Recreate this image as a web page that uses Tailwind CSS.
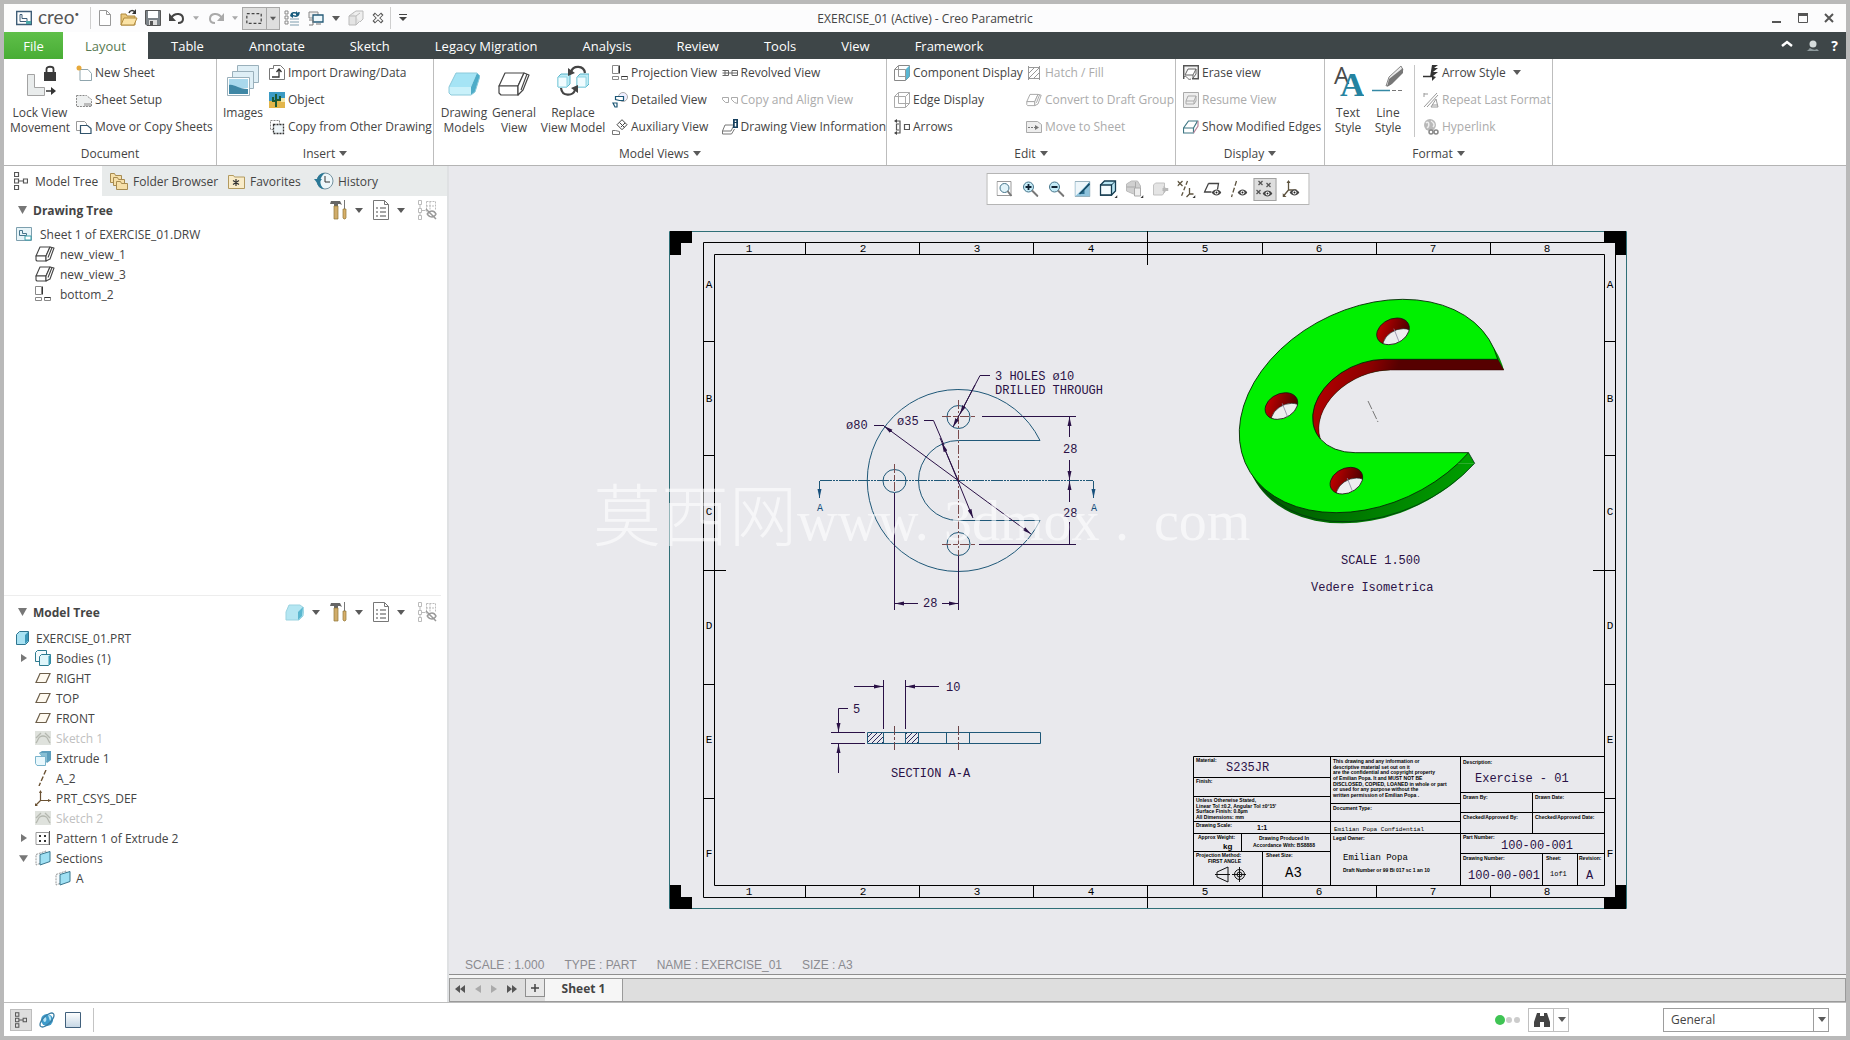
<!DOCTYPE html>
<html lang="en">
<head>
<meta charset="utf-8">
<title>EXERCISE_01 (Active) - Creo Parametric</title>
<script src="https://cdn.jsdelivr.net/npm/@tailwindcss/browser@4"></script>
</head>
<body class="flex h-screen flex-col overflow-hidden border-4 border-[#b9b9b9] bg-white font-['Open_Sans','Noto_Sans',sans-serif] text-xs leading-[15px] text-[#444]">

<svg class="hidden" aria-hidden="true">
  <symbol id="caret" viewBox="0 0 8 5"><path d="M0 0h8L4 5z" fill="#5a5a5a"/></symbol>
  <symbol id="view" viewBox="0 0 20 16"><g fill="#fff" stroke="#444" stroke-width="1.100" stroke-linejoin="round"><path d="M5 1h10L11 10H1z"/><path d="M1 10v4l1 1h9l0-5z"/><path d="M15 1l4 1-4 11-4 2v-5z"/><path d="M17 1.500l-4 10" fill="none"/></g></symbol>
  <symbol id="proj" viewBox="0 0 16 16"><g fill="none" stroke="#888"><path d="M.5.500h6v8h-6z"/><path d="M.5 11.500h6v3h-6zM9.500 11.500h6v3h-6z"/><path d="M7.500.500v8M9.500 11.500h6" stroke="#333"/></g></symbol>
  <symbol id="plane" viewBox="0 0 16 16"><path d="M5 3.500h10l-4 9H1z" fill="#fffaf0" stroke="#6d5f4b" stroke-width="1.200"/></symbol>
  <symbol id="sketch" viewBox="0 0 16 16"><path d="M0 1h16v14H0z" fill="#dfe2dd"/><path d="M1 13c3-4 2-7 7-7s4 3 7 7M1 8l5-5M15 8l-5-5" fill="none" stroke="#b4b7af" stroke-width="1.300"/></symbol>
  <symbol id="section" viewBox="0 0 16 16"><path d="M1 4.500L11 1v10L1 15z" fill="#f7fbfd" stroke="#999" stroke-dasharray="2 1"/><path d="M5 4.500L15 1.500v10L5 15z" fill="#9fe0f3" stroke="#38768e"/></symbol>
  <symbol id="tools" viewBox="0 0 17 20"><path d="M1 1h9l2 4-2-1H8v2H4V4H0z" fill="#666"/><path d="M4 6h4v13H4z" fill="#d0ac6a" stroke="#8f7538" stroke-width=".7"/><path d="M14.500 0v9" stroke="#777"/><path d="M13 9h3v9l-1 1h-1l-1-1z" fill="#d8b06a" stroke="#8f7538" stroke-width=".7"/></symbol>
  <symbol id="list" viewBox="0 0 16 20"><path d="M.5.500h11l4 4v15H.5z" fill="#fff" stroke="#777"/><path d="M11.500.500v4h4" fill="none" stroke="#777"/><path d="M3 8h2M3 12h2M3 16h2M7 8h6M7 12h6M7 16h6" stroke="#888" stroke-width="1.300"/></symbol>
  <symbol id="hidetree" viewBox="0 0 20 20"><g fill="none" stroke="#bbb"><path d="M1.500.500h3v4h-3zM1.500 8.500h3v4h-3zM1.500 15.500h3v4h-3zM3 4.500v4M3 12.500v3M4.500 10.500h4"/><path d="M9.500 1.500h9v9M9.500 1.500v10M13 1.500v9M9 6h9" stroke-dasharray="2 1"/></g><path d="M10 14c3-4 7-4 9 0-2 4-6 4-9 0M9 9l10 10" fill="none" stroke="#999" stroke-width="1.500"/></symbol>
  <symbol id="nodes" viewBox="0 0 14 18"><path d="M.5.500h4v4h-4zM.5 7h4v4h-4zM.5 13.500h4v4h-4zM9.500 7h4v4h-4zM4.500 9h5" fill="none" stroke="#555" stroke-width="1.200"/></symbol>
  <symbol id="eye" viewBox="0 0 10 7"><path d="M0 3.500C3-.5 7-.5 10 3.500 7 7.500 3 7.500 0 3.500" fill="#444"/><circle cx="5" cy="3.500" r="2" fill="#fff"/><circle cx="5" cy="3.500" r="1" fill="#222"/></symbol>
</svg>

<!-- Title bar -->
<header class="flex h-7 shrink-0 items-center bg-[#fcfcfd]">
  <div class="flex w-[415px] shrink-0 items-center">
    <svg class="ml-3 size-4" viewBox="0 0 16 16"><path d="M.7 1.500h14.600v13H.7z" fill="#fff" stroke="#3f5d78" stroke-width="1.400"/><path d="M4 4.500h2v4h5v3H4z" fill="none" stroke="#3f5d78"/><path d="M10 11h5v3h-5z" fill="#49a5a5"/></svg>
    <span class="ml-1.5 flex h-5 w-[42px] items-start font-['Lato',sans-serif] text-[19px] leading-[18px] text-[#555]">creo<span class="text-[8px] leading-[12px]">•</span></span>
    <span class="ml-2.5 h-[22px] w-px bg-[#cfcfcf]"></span>
    <button class="ml-1.5 size-4" aria-label="New"><svg viewBox="0 0 16 16"><path d="M2.500.500h7l4 4v11h-11z" fill="#fff" stroke="#999"/><path d="M9.500.500v4h4" fill="none" stroke="#999"/></svg></button>
    <button class="ml-[7px] size-[18px]" aria-label="Open"><svg viewBox="0 0 18 18"><path d="M1 5h5l1 2h8v9H1z" fill="#e9c77c" stroke="#b08a3d"/><path d="M4 9h13l-3 7H1z" fill="#fbe3a6" stroke="#b08a3d"/><path d="M9 4c1-3 4-3 6-1" fill="none" stroke="#333" stroke-width="1.500"/><path d="M16 0v5h-4z" fill="#333"/></svg></button>
    <button class="ml-[7px] size-4" aria-label="Save"><svg viewBox="0 0 16 16"><path d="M.5.500h15v15H2l-1.500-1.500z" fill="#7d8489" stroke="#555"/><path d="M3 1h10v7H3z" fill="#fff"/><path d="M4 10h8v5H4z" fill="#ddd"/><path d="M5 11h3v4H5z" fill="#555"/></svg></button>
    <button class="ml-2 size-4" aria-label="Undo"><svg viewBox="0 0 16 16"><path d="M2 8c4-6 12-5 12 1 0 3-2 4-5 4" fill="none" stroke="#444" stroke-width="2"/><path d="M0 3v8h7z" fill="#444"/></svg></button>
    <svg class="ml-2 h-1 w-1.5 opacity-50"><use href="#caret"/></svg>
    <button class="ml-[9px] size-4" aria-label="Redo"><svg viewBox="0 0 16 16"><path d="M14 8C10 2 2 3 2 9c0 3 2 4 5 4" fill="none" stroke="#aaa" stroke-width="2"/><path d="M16 3v8H9z" fill="#aaa"/></svg></button>
    <svg class="ml-2 h-1 w-1.5 opacity-50"><use href="#caret"/></svg>
    <button class="ml-1 flex h-[23px] w-[38px] items-center border border-[#a8a8a8] bg-[#dedede]" aria-label="Select"><svg class="h-[21px] w-6 shrink-0 border-r border-[#a8a8a8]" viewBox="0 0 24 21"><path d="M4 5.500h15v10H4z" fill="none" stroke="#444" stroke-width="1.300" stroke-dasharray="3 2"/></svg><svg class="ml-[3px] h-[5px] w-1.5"><use href="#caret"/></svg></button>
    <button class="ml-1 size-4" aria-label="Regenerate"><svg viewBox="0 0 16 16"><path d="M1 1h3v3H1zM1 6h3v3H1zM1 11h3v3H1z" fill="none" stroke="#888"/><path d="M6 9h9M6 12h9M6 15h9" stroke="#7c9cad" stroke-width="1.200"/><path d="M7 6c0-4 4-4 7-2M15 2c0 5-4 5-7 3" fill="none" stroke="#165b7d" stroke-width="1.500"/><path d="M12 1v5l3-2zM9 3v5L6 6z" fill="#165b7d"/></svg></button>
    <button class="ml-2 size-4" aria-label="Windows"><svg viewBox="0 0 16 16"><path d="M1 2h9v6H1z" fill="#eee" stroke="#888"/><path d="M5 5h10v7H5z" fill="#eef8fc" stroke="#245a77" stroke-width="1.300"/><path d="M1 10h4v5H1M8 14h5" fill="none" stroke="#777"/></svg></button>
    <svg class="ml-2 h-[5px] w-2"><use href="#caret"/></svg>
    <button class="ml-2 size-4" aria-label="Close inactive"><svg viewBox="0 0 16 16"><path d="M1 6l4-3h7v8l-4 4H1z" fill="#e4e4e4" stroke="#bbb"/><path d="M5 3l3-2h7v8l-3 3" fill="#efefef" stroke="#bbb"/><path d="M1 6h7v9M8 6l4-3" fill="none" stroke="#bbb"/></svg></button>
    <button class="ml-2 size-3" aria-label="Close window"><svg viewBox="0 0 14 14"><path d="M2 2l10 10M12 2L2 12" stroke="#555" stroke-width="4"/><path d="M3 3l8 8M11 3l-8 8" stroke="#fff" stroke-width="2"/></svg></button>
    <span class="ml-1.5 h-[22px] w-px bg-[#cfcfcf]"></span>
    <button class="ml-2 w-2" aria-label="Customize toolbar"><svg viewBox="0 0 8 8"><path d="M0 0h8v1H0zM0 3h8L4 7z" fill="#444"/></svg></button>
  </div>
  <h1 class="grow text-center">EXERCISE_01 (Active) - Creo Parametric</h1>
  <div class="flex w-[415px] shrink-0 items-center justify-end gap-4 pr-3">
    <button aria-label="Minimize"><svg class="size-2.5" viewBox="0 0 10 10"><path d="M0 8h9v2H0z" fill="#555"/></svg></button>
    <button aria-label="Maximize"><svg class="size-2.5" viewBox="0 0 10 10"><path d="M.5 1h9v8.500h-9z" fill="none" stroke="#555"/><path d="M0 0h10v3H0z" fill="#555"/></svg></button>
    <button aria-label="Close"><svg class="size-2.5" viewBox="0 0 10 10"><path d="M1 1l8 8M9 1L1 9" stroke="#555" stroke-width="2"/></svg></button>
  </div>
</header>

<!-- Ribbon tabs -->
<nav class="flex h-[27px] shrink-0 items-stretch bg-[#3e4648] text-[13px] text-white">
  <button class="w-[59px] bg-gradient-to-b from-[#5fbf49] to-[#48ad35] pt-0.5">File</button>
  <button class="w-[85px] bg-white pt-0.5 text-[#587a52]">Layout</button>
  <div class="flex grow items-center gap-[45px] pl-[23px] pt-0.5">
    <button>Table</button><button>Annotate</button><button>Sketch</button><button>Legacy Migration</button><button>Analysis</button><button>Review</button><button>Tools</button><button>View</button><button>Framework</button>
  </div>
  <div class="flex items-center gap-3 pr-2">
    <button aria-label="Collapse ribbon"><svg class="h-3 w-3" viewBox="0 0 12 12"><path d="M1 6l5-4 5 4" fill="none" stroke="#fff" stroke-width="2.500"/></svg></button>
    <button aria-label="Account"><svg class="h-3 w-3.5" viewBox="0 0 14 12"><circle cx="8" cy="4" r="3.500" fill="#d6dcdc"/><path d="M0 11c4 0 3-2 5-3 3 2 5 2 7 1l2 2z" fill="#8e9a9c"/></svg></button>
    <button class="text-sm font-bold" aria-label="Help">?</button>
  </div>
</nav>

<!-- Ribbon -->
<section class="flex h-[107px] shrink-0 border-b border-[#b4b4b4] bg-white">
  <div class="flex w-[213px] flex-col border-r border-[#bdbdbd]">
    <div class="flex h-[82px]">
      <button class="ml-1 flex w-[64px] shrink-0 flex-col items-center gap-2 pt-1.5"><svg class="size-8 shrink-0" viewBox="0 0 32 32"><path d="M3.500 9.500h7v13h10v8h-17z" fill="#e9ecec" stroke="#a3a3a3"/><path d="M20 7h12v9H20z" fill="#3a3a3a"/><path d="M22.500 7V4c0-3 7-3 7 0v3" fill="none" stroke="#3a3a3a" stroke-width="1.800"/><path d="M22 26h7" stroke="#333" stroke-width="1.500"/><path d="M27 22l5 4-5 4z" fill="#333"/></svg><span>Lock View<br>Movement</span></button>
      <div class="ml-1 flex flex-col items-start whitespace-nowrap">
        <button class="flex h-[27px] items-center gap-[3px]"><svg class="size-4" viewBox="0 0 16 16"><path d="M4 4.500h8l3.500 4v7H4z" fill="#fff" stroke="#8fa5ad"/><circle cx="3" cy="3" r="2.500" fill="#e7a93b"/></svg>New Sheet</button>
        <button class="flex h-[27px] items-center gap-[3px]"><svg class="size-4" viewBox="0 0 16 16"><path d="M.5 3.500h10l5 4v7H.5z" fill="#eef0f0" stroke="#888" stroke-dasharray="2 1"/><path d="M8 11h7v3H8z" fill="#bbb"/></svg>Sheet Setup</button>
        <button class="flex h-[27px] items-center gap-[3px]"><svg class="size-4" viewBox="0 0 16 16"><path d="M.5 2.500h8l2 2v7H.5z" fill="#fff" stroke="#999"/><path d="M4.500 6.500h7l3.500 3v5H4.500z" fill="#fff" stroke="#31536b" stroke-width="1.200"/></svg>Move or Copy Sheets</button>
      </div>
    </div>
    <div class="flex h-6 items-center justify-center">Document</div>
  </div>
  <div class="flex w-[217px] flex-col border-r border-[#bdbdbd]">
    <div class="flex h-[82px]">
      <button class="ml-1 flex w-11 shrink-0 flex-col items-center gap-2 pt-1.5"><svg class="size-8 shrink-0" viewBox="0 0 32 32"><g fill="#dfeff6" stroke="#9ab0bb"><path d="M10.500.500h21v17h-21z"/><path d="M5.500 6.500h21v17h-21z"/><path d="M.5 12.500h22v18H.5z" fill="#fff"/></g><path d="M2 14h19v9H2z" fill="#a9d8ec"/><path d="M2 20c6-1 8 4 19 4v5H2z" fill="#3f87a5"/></svg><span>Images</span></button>
      <div class="ml-1 flex flex-col items-start whitespace-nowrap">
        <button class="flex h-[27px] items-center gap-[3px]"><svg class="size-4" viewBox="0 0 16 16"><path d="M.5 3.500h4v-3h7l4 4v10H.5z" fill="#fff" stroke="#777"/><path d="M3 12h7V5M7.500 7L10 4l2.500 3" fill="none" stroke="#333" stroke-width="1.300"/></svg>Import Drawing/Data</button>
        <button class="flex h-[27px] items-center gap-[3px]"><svg class="size-4" viewBox="0 0 16 16"><path d="M0 0h16v16H0z" fill="#3b9bc4"/><path d="M0 9h16v7H0z" fill="#e2b54a"/><path d="M7 15V2M4 5v4h3M11 4v4H7" fill="none" stroke="#1d5a33" stroke-width="2"/><path d="M12 6h4v4h-4z" fill="#f3e6a8"/></svg>Object</button>
        <button class="flex h-[27px] items-center gap-[3px]"><svg class="size-4" viewBox="0 0 16 16"><path d="M1.500 1.500h9v9h-9z" fill="none" stroke="#888" stroke-dasharray="2 1"/><path d="M4.500 5.500h10v9h-10z" fill="#eef5f8" stroke="#333" stroke-width="1.300" stroke-dasharray="2 1"/></svg>Copy from Other Drawing</button>
      </div>
    </div>
    <button class="flex h-6 items-center justify-center gap-1">Insert<svg class="h-[5px] w-2"><use href="#caret"/></svg></button>
  </div>
  <div class="flex w-[453px] flex-col border-r border-[#bdbdbd]">
    <div class="flex h-[82px]">
      <button class="ml-1 flex w-[52px] shrink-0 flex-col items-center gap-2 pt-1.5"><svg class="size-8 shrink-0" viewBox="0 0 32 32"><path d="M8 8h21l-6 14H1z" fill="#a5e4f5"/><path d="M1 22h22v8H3l-2-2z" fill="#c9f1fa"/><path d="M29 8l3 3-5 16-4 3v-8z" fill="#4eacc8"/><path d="M8 8h21l3 3-5 16-4 3H3l-2-2v-6z" fill="none" stroke="#8ccadb"/></svg><span>Drawing<br>Models</span></button>
      <button class="flex w-12 shrink-0 flex-col items-center gap-2 pt-1.5"><svg class="size-8 shrink-0" viewBox="0 0 32 32"><g fill="#fff" stroke="#444" stroke-width="1.200" stroke-linejoin="round"><path d="M7 8h19l-6 13H1z"/><path d="M1 21v7l2 2h17v-9z"/><path d="M26 8l5 2-6 15-5 5v-9z"/><path d="M29 9l-6 16" fill="none"/></g></svg><span>General<br>View</span></button>
      <button class="flex w-[70px] shrink-0 flex-col items-center gap-2 whitespace-nowrap pt-1.5"><svg class="size-8 shrink-0" viewBox="0 0 32 32"><path d="M1 12l3-3h9v10l-3 3H1zM20 12l3-3h9v10l-3 3h-9z" fill="#bdebf5" stroke="#5ab4c9"/><path d="M1 12h9v10H1zM20 12h9v10h-9z" fill="#f1fcff" stroke="#8ed4e2"/><path d="M28 8c-1-8-12-8-14-1M4 23c1 9 12 8 14 2" fill="none" stroke="#444" stroke-width="2.200"/><path d="M11 3v8l7-3zM21 28v-8l-7 3z" fill="#444"/></svg><span>Replace<br>View Model</span></button>
      <div class="ml-1 flex w-[110px] flex-col items-start whitespace-nowrap">
        <button class="flex h-[27px] items-center gap-[3px]"><svg class="size-4"><use href="#proj"/></svg>Projection View</button>
        <button class="flex h-[27px] items-center gap-[3px]"><svg class="size-4" viewBox="0 0 16 16"><circle cx="11" cy="5" r="4.500" fill="#eef" stroke="#aaa"/><path d="M3.500 4.500h8v4h-4l-4-1zM1 11h4v4H3z" fill="#fff" stroke="#1b5675" stroke-width="1.200"/></svg>Detailed View</button>
        <button class="flex h-[27px] items-center gap-[3px]"><svg class="size-4" viewBox="0 0 16 16"><path d="M10 .7l5 5-5 5-5-5z" fill="#fff" stroke="#444"/><path d="M7.500 3.500l5 5M9 8l4-4" stroke="#444"/><path d="M.5 15.500v-4h3l4 1v3z" fill="none" stroke="#777"/></svg>Auxiliary View</button>
      </div>
      <div class="flex flex-col items-start whitespace-nowrap">
        <button class="flex h-[27px] items-center gap-[3px]"><svg class="size-4" viewBox="0 0 16 16"><path d="M.5 5.500h6v5h-6M3 5.500v5M.5 8H16M10 5.500h5.500v5H10z" fill="none" stroke="#666"/></svg>Revolved View</button>
        <button class="flex h-[27px] items-center gap-[3px] text-[#ababab]"><svg class="size-4" viewBox="0 0 16 16"><path d="M.5 5.500h6v5h-3l-3-3zM9.500 5.500h6v6l-3-1-3-3z" fill="none" stroke="#aaa"/></svg>Copy and Align View</button>
        <button class="flex h-[27px] items-center gap-[3px]"><svg class="size-4" viewBox="0 0 16 16"><path d="M3 6h9l-3 6H.5zM.5 12v3h9l3-5" fill="#fff" stroke="#777"/><path d="M11 0h5v9h-5z" fill="#17405e"/><path d="M13.500 1.500v1.500M13.500 4v3.500" stroke="#fff" stroke-width="1.500"/></svg>Drawing View Information</button>
      </div>
    </div>
    <button class="flex h-6 items-center justify-center gap-1">Model Views<svg class="h-[5px] w-2"><use href="#caret"/></svg></button>
  </div>
  <div class="flex w-[289px] flex-col border-r border-[#bdbdbd]">
    <div class="flex h-[82px] pl-[7px]">
      <div class="flex w-[132px] flex-col items-start whitespace-nowrap">
        <button class="flex h-[27px] items-center gap-[3px]"><svg class="size-4" viewBox="0 0 16 16"><path d="M.5 4.500l4-4h11v11l-4 4H.5z" fill="#fff" stroke="#888"/><path d="M11.500 4.500l4-4v11l-4 4z" fill="#59b7d3"/><path d="M4.500.500v11h7M.5 4.500h11v11" fill="none" stroke="#999"/></svg>Component Display</button>
        <button class="flex h-[27px] items-center gap-[3px]"><svg class="size-4" viewBox="0 0 16 16"><path d="M.5 4.500l4-4h11v11l-4 4H.5zM4.500.500v11h11M.5 4.500h11v11M11.500 4.500l4-4" fill="none" stroke="#aaa"/></svg>Edge Display</button>
        <button class="flex h-[27px] items-center gap-[3px]"><svg class="size-4" viewBox="0 0 16 16"><path d="M2 2h4v12H2M5 5H2.500v6H5M10.500 5.500h5v5h-5z" fill="none" stroke="#555" stroke-width="1.200"/><path d="M0 2l3-2v4zM0 14l3-2v4z" fill="#444"/></svg>Arrows</button>
      </div>
      <div class="flex flex-col items-start whitespace-nowrap text-[#ababab]">
        <button class="flex h-[27px] items-center gap-[3px]"><svg class="size-4" viewBox="0 0 16 16"><path d="M2 2.500h12M2 13.500h12M2.500 1v14M13.500 1v14M3 8l5-5M3 13L13 3M8 13l5-5" stroke="#999" fill="none"/></svg>Hatch / Fill</button>
        <button class="flex h-[27px] items-center gap-[3px]"><svg class="size-4 opacity-50"><use href="#view"/></svg>Convert to Draft Group</button>
        <button class="flex h-[27px] items-center gap-[3px]"><svg class="size-4" viewBox="0 0 16 16"><path d="M.5 2.500h11l4 3v8H.5z" fill="#eee" stroke="#aaa"/><path d="M2 8.500h8" stroke="#777" stroke-dasharray="2 1"/><path d="M9 6l4 2.500L9 11z" fill="#777"/></svg>Move to Sheet</button>
      </div>
    </div>
    <button class="flex h-6 items-center justify-center gap-1">Edit<svg class="h-[5px] w-2"><use href="#caret"/></svg></button>
  </div>
  <div class="flex w-[149px] flex-col border-r border-[#bdbdbd]">
    <div class="flex h-[82px] flex-col items-start whitespace-nowrap pl-[7px]">
      <button class="flex h-[27px] items-center gap-[3px]"><svg class="size-4" viewBox="0 0 16 16"><path d="M.7 9V.7h14.600v13H9M.7 9v5" fill="#f4f4f4" stroke="#555" stroke-width="1.400"/><path d="M2 10l3-6h8l-3 6zM10 10v3l3-4V4M1 12c3-3 3 4 7 2" fill="#fff" stroke="#666"/></svg>Erase view</button>
      <button class="flex h-[27px] items-center gap-[3px] text-[#ababab]"><svg class="size-4" viewBox="0 0 16 16"><path d="M.5.500h15v15H.5z" fill="#eee" stroke="#aaa"/><path d="M3 9l2-5h8l-2 5zM3 9v3h8V9M11 12l2-3V4" fill="none" stroke="#aaa"/></svg>Resume View</button>
      <button class="flex h-[27px] items-center gap-[3px]"><svg class="size-4" viewBox="0 0 16 16"><path d="M.5 9l5-7h9l-4 7zM.5 9v5h10V9" fill="#fff" stroke="#3f7784" stroke-width="1.200"/><path d="M10.500 14l4.500-7V2" fill="none" stroke="#b8869b" stroke-width="1.200"/></svg>Show Modified Edges</button>
    </div>
    <button class="flex h-6 items-center justify-center gap-1">Display<svg class="h-[5px] w-2"><use href="#caret"/></svg></button>
  </div>
  <div class="flex w-[228px] flex-col border-r border-[#bdbdbd]">
    <div class="flex h-[82px]">
      <button class="ml-[3px] flex w-10 shrink-0 flex-col items-center gap-2 pt-1.5"><svg class="size-8 shrink-0" viewBox="0 0 32 32"><text x="2" y="19" font-family="Open Sans" font-size="24" fill="#4a4a4a">A</text><text x="8" y="31" font-family="Liberation Serif" font-weight="700" font-size="34" fill="#2583a0">A</text></svg><span>Text<br>Style</span></button>
      <button class="flex w-10 shrink-0 flex-col items-center gap-2 pt-1.5"><svg class="size-8 shrink-0" viewBox="0 0 32 32"><path d="M14 21l3-9L29 1l2 4-12 14z" fill="#ececec" stroke="#888"/><path d="M17 14L31 3v5L20 19l-5 3z" fill="#777"/><path d="M0 25.500h18" stroke="#3589a5" stroke-width="1.500"/><path d="M20 25.500h12" stroke="#777" stroke-dasharray="4 2"/></svg><span>Line<br>Style</span></button>
      <span class="ml-1.5 mt-1.5 h-[72px] w-px bg-[#c6c6c6]"></span>
      <div class="ml-2 flex flex-col items-start whitespace-nowrap">
        <button class="flex h-[27px] items-center gap-[3px]"><svg class="size-4" viewBox="0 0 16 16"><path d="M0 11.500h9" stroke="#333" stroke-width="1.500"/><path d="M9 0h6l-4 3h4l-5 4h5l-5 4 3 1-4 4V12H7z" fill="#333"/></svg>Arrow Style<svg class="ml-1 h-[5px] w-2"><use href="#caret"/></svg></button>
        <button class="flex h-[27px] items-center gap-[3px] text-[#ababab]"><svg class="size-4" viewBox="0 0 16 16"><path d="M1 15L14 1M4 15L15 3M1 2h4M1 5V1M8 15l5-8 2 8zM9 13h5" fill="none" stroke="#999"/></svg>Repeat Last Format</button>
        <button class="flex h-[27px] items-center gap-[3px] text-[#ababab]"><svg class="size-4" viewBox="0 0 16 16"><circle cx="7" cy="6" r="6" fill="#b9b9b9"/><path d="M3 4c3-3 4 3 1 5M8 2c3 2 4 4 2 6" stroke="#eee" fill="none" stroke-width="1.500"/><circle cx="8" cy="13" r="2" fill="#fff" stroke="#888" stroke-width="1.500"/><circle cx="13" cy="13" r="2" fill="#fff" stroke="#888" stroke-width="1.500"/></svg>Hyperlink</button>
      </div>
    </div>
    <button class="flex h-6 items-center justify-center gap-1">Format<svg class="h-[5px] w-2"><use href="#caret"/></svg></button>
  </div>
</section>

<main class="flex min-h-0 grow">
  <!-- Navigator -->
  <aside class="flex w-[443px] shrink-0 flex-col bg-white">
    <div class="flex h-[30px] shrink-0 items-center whitespace-nowrap bg-[#e8ebeb]">
      <button class="flex h-full w-[98px] items-center gap-[7px] bg-white pl-2.5"><svg class="h-[18px] w-3.5"><use href="#nodes"/></svg>Model Tree</button>
      <button class="ml-2 flex w-[118px] items-center gap-[5px]"><svg class="size-[18px]" viewBox="0 0 18 18"><g fill="#f6dfa8" stroke="#a78b50"><path d="M.5 1.500h4l1 2h6v7H.5z"/><path d="M3.500 5.500h4l1 2h6v6h-11z"/><path d="M6.500 9.500h4l1 2h6v6h-11z"/></g></svg>Folder Browser</button>
      <button class="flex w-[86px] items-center gap-[5px]"><svg class="h-[15px] w-[17px]" viewBox="0 0 17 15"><path d="M.5 1.500h5l1 1.500h10v11.500H.5z" fill="#f9ecc9" stroke="#b39a5f"/><path d="M8 5v7M5 6.500l6 4M11 6.500l-6 4" stroke="#333" stroke-width="1.200"/></svg>Favorites</button>
      <button class="flex items-center gap-1"><svg class="h-[18px] w-5" viewBox="0 0 20 18"><circle cx="11" cy="9" r="8" fill="#eef7fa" stroke="#75929f"/><path d="M11 1C0 1 1 17 10 17 5 13 5 5 11 1" fill="#2a7896"/><path d="M0 7h8l-4 5z" fill="#2a7896"/><path d="M11 4v6h5" fill="none" stroke="#333"/></svg>History</button>
    </div>
    <section class="mr-1.5 h-[400px] shrink-0 border-b border-[#ededed]">
      <div class="flex h-7 items-center pl-3.5 pr-1">
        <svg class="h-2 w-[9px]" viewBox="0 0 9 8"><path d="M0 0h9L4.500 8z" fill="#777"/></svg>
        <h2 class="ml-1.5 grow font-bold">Drawing Tree</h2>
        <button aria-label="Settings"><svg class="h-5 w-[17px]"><use href="#tools"/></svg></button>
        <svg class="ml-2 h-[5px] w-2"><use href="#caret"/></svg>
        <button class="ml-2.5" aria-label="Display"><svg class="h-5 w-4"><use href="#list"/></svg></button>
        <svg class="ml-2 h-[5px] w-2"><use href="#caret"/></svg>
        <button class="ml-3" aria-label="Hide"><svg class="size-5"><use href="#hidetree"/></svg></button>
      </div>
      <ul>
        <li class="flex h-5 items-center gap-2 pl-3"><svg class="size-4" viewBox="0 0 16 16"><path d="M.5 1.500h15v13H.5z" fill="#e7f4f8" stroke="#7d9fae"/><path d="M3.500 4.500h3v3h4v2h-7z" fill="none" stroke="#46748b"/><path d="M9 10h6v4H9z" fill="#fff" stroke="#3aa0aa"/></svg>Sheet 1 of EXERCISE_01.DRW</li>
        <li class="flex h-5 items-center gap-[5px] pl-[31px]"><svg class="h-4 w-5"><use href="#view"/></svg>new_view_1</li>
        <li class="flex h-5 items-center gap-[5px] pl-[31px]"><svg class="h-4 w-5"><use href="#view"/></svg>new_view_3</li>
        <li class="flex h-5 items-center gap-[9px] pl-[31px]"><svg class="size-4"><use href="#proj"/></svg>bottom_2</li>
      </ul>
    </section>
    <section class="mr-1.5 grow">
      <div class="flex h-8 items-center pl-3.5 pr-1">
        <svg class="h-2 w-[9px]" viewBox="0 0 9 8"><path d="M0 0h9L4.500 8z" fill="#777"/></svg>
        <h2 class="ml-1.5 grow font-bold">Model Tree</h2>
        <button aria-label="Model"><svg class="h-[17px] w-[19px]" viewBox="0 0 19 17"><path d="M4 1h11l4 3-1 8-4 4H1V8z" fill="#b4e6f2" stroke="#9bd3e0"/><path d="M13 8l5-5-1 9-4 4z" fill="#5bb7cf"/></svg></button>
        <svg class="ml-2 h-[5px] w-2"><use href="#caret"/></svg>
        <button class="ml-2.5" aria-label="Settings"><svg class="h-5 w-[17px]"><use href="#tools"/></svg></button>
        <svg class="ml-2 h-[5px] w-2"><use href="#caret"/></svg>
        <button class="ml-2.5" aria-label="Display"><svg class="h-5 w-4"><use href="#list"/></svg></button>
        <svg class="ml-2 h-[5px] w-2"><use href="#caret"/></svg>
        <button class="ml-3" aria-label="Hide"><svg class="size-5"><use href="#hidetree"/></svg></button>
      </div>
      <ul>
        <li class="flex h-5 items-center gap-[7px] pl-3"><svg class="h-3.5 w-[13px]" viewBox="0 0 13 14"><path d="M.5 3.500l3-3h9v10l-3 3h-9z" fill="#a8e2f3" stroke="#2e7590"/><path d="M9 4l3-3v9l-3 3z" fill="#3b97b8"/></svg>EXERCISE_01.PRT</li>
        <li class="flex h-5 items-center gap-[5px] pl-4"><svg class="mr-0.5 h-2 w-2" viewBox="0 0 8 8"><path d="M1 0l6 4-6 4z" fill="#777"/></svg><svg class="size-4" viewBox="0 0 16 16"><path d="M.5 2.500l2-2h9v9l-2 2h-9z" fill="#f4fbfd" stroke="#2d7b90"/><path d="M4.500 6.500l2-2h9v9l-2 2h-9z" fill="#dff6fa" stroke="#2d7b90"/><path d="M13.500 6.500l2-2v9l-2 2z" fill="#3a9ab3"/></svg>Bodies (1)</li>
        <li class="flex h-5 items-center gap-[5px] pl-[31px]"><svg class="size-4"><use href="#plane"/></svg>RIGHT</li>
        <li class="flex h-5 items-center gap-[5px] pl-[31px]"><svg class="size-4"><use href="#plane"/></svg>TOP</li>
        <li class="flex h-5 items-center gap-[5px] pl-[31px]"><svg class="size-4"><use href="#plane"/></svg>FRONT</li>
        <li class="flex h-5 items-center gap-[5px] pl-[31px] text-[#c0c0c0]"><svg class="size-4"><use href="#sketch"/></svg>Sketch 1</li>
        <li class="flex h-5 items-center gap-[5px] pl-[31px]"><svg class="size-4" viewBox="0 0 16 16"><path d="M4 3l3-2h9v9l-4 3z" fill="#5d9fbd"/><path d="M4 3h8v9" fill="#88bfd4"/><path d="M.5 6.500h10v9H2l-1.500-2z" fill="#e9f8fd" stroke="#7ab4cc"/></svg>Extrude 1</li>
        <li class="flex h-5 items-center gap-[5px] pl-[31px]"><svg class="size-4" viewBox="0 0 16 16"><path d="M11 0L4 16" stroke="#6a5132" stroke-width="1.400" stroke-dasharray="5 2"/></svg>A_2</li>
        <li class="flex h-5 items-center gap-[5px] pl-[31px]"><svg class="size-4" viewBox="0 0 16 16"><path d="M5.500 1v9.500H16M5.500 10.500L1 15" fill="none" stroke="#6a5132" stroke-width="1.200"/><path d="M4 3h3L5.500 0zM13 9v3l3-1.500zM0 13v3h3z" fill="#6a5132"/></svg>PRT_CSYS_DEF</li>
        <li class="flex h-5 items-center gap-[5px] pl-[31px] text-[#c0c0c0]"><svg class="size-4"><use href="#sketch"/></svg>Sketch 2</li>
        <li class="flex h-5 items-center gap-[5px] pl-4"><svg class="mr-0.5 h-2 w-2" viewBox="0 0 8 8"><path d="M1 0l6 4-6 4z" fill="#777"/></svg><svg class="size-4" viewBox="0 0 16 16"><path d="M1 2.500h13v12H1z" fill="#fff" stroke="#999"/><path d="M14.500 1v14" stroke="#555"/><path d="M4 5h2v2H4zM9 5h2v2H9zM4 10h2v2H4zM9 10h2v2H9z" fill="#333"/></svg>Pattern 1 of Extrude 2</li>
        <li class="flex h-5 items-center gap-[5px] pl-[15px]"><svg class="mr-0.5 h-[7px] w-[9px]" viewBox="0 0 8 6"><path d="M0 0h8L4 6z" fill="#777"/></svg><svg class="size-4"><use href="#section"/></svg>Sections</li>
        <li class="flex h-5 items-center gap-[5px] pl-[51px]"><svg class="size-4"><use href="#section"/></svg>A</li>
      </ul>
    </section>
  </aside>

  <section class="flex min-w-0 grow flex-col border-l-2 border-[#dfe1e3] bg-[#e9e9ed]">
    <!-- Graphics area -->
    <div class="relative min-h-0 grow">
      <svg class="absolute inset-0 h-full w-full" viewBox="449 166 1397 808" font-family="Liberation Mono, monospace" font-size="12">
        <defs>
          <pattern id="hatch" width="5" height="5" patternUnits="userSpaceOnUse"><path d="M-1 6L6-1M-1 1L1-1M4 6l2-2" stroke="#2b2a5e"/></pattern>
          <clipPath id="holeclip"><circle r="5"/></clipPath>
          <linearGradient id="side"><stop offset="0" stop-color="#004d00"/><stop offset=".4" stop-color="#006800"/><stop offset="1" stop-color="#00a000"/></linearGradient>
          <linearGradient id="wall"><stop offset="0" stop-color="#b00000"/><stop offset=".25" stop-color="#8a0000"/><stop offset=".4" stop-color="#560000"/><stop offset="1" stop-color="#560000"/></linearGradient>
          <linearGradient id="bore"><stop offset="0" stop-color="#c00000"/><stop offset="1" stop-color="#4a0000"/></linearGradient>
          <g id="hole"><circle r="5" fill="url(#bore)"/><g clip-path="url(#holeclip)"><circle cx="3" cy="-4" r="5" fill="#ededf0" stroke="#222" vector-effect="non-scaling-stroke" stroke-width=".7"/></g><circle r="5" fill="none" stroke="#111" stroke-width=".8" vector-effect="non-scaling-stroke"/><path d="M0 1L3-4" stroke="#8a86a0" stroke-width=".8" vector-effect="non-scaling-stroke"/></g>
          <marker id="arr" viewBox="0 0 9 6" refX="9" refY="3" markerWidth="9" markerHeight="6" orient="auto-start-reverse" markerUnits="userSpaceOnUse"><path d="M0 1l9 2-9 2z" fill="#2a1146"/></marker>
          <marker id="arrb" viewBox="0 0 9 6" refX="9" refY="3" markerWidth="9" markerHeight="6" orient="auto" markerUnits="userSpaceOnUse"><path d="M0 1l9 2-9 2z" fill="#17507c"/></marker>
        </defs>

        <!-- Sheet border and zones -->
        <path d="M669.500 231.500h957v677h-957z" fill="none" stroke="#2f6f77"/>
        <path d="M670 231h22v12h-11v12h-11zM1626 231h-22v12h12v12h10zM670 909h22v-12h-11v-12h-11zM1626 909h-22v-12h12v-12h10z"/>
        <g fill="none" stroke="#000">
          <path d="M703.500 242.500h912v655h-912zM714.500 254.500h890v631h-890z"/>
          <path d="M805.500 242v12M919.500 242v12M1033.500 242v12M1262.500 242v12M1376.500 242v12M1490.500 242v12M1147.500 231v34"/>
          <path d="M805.500 886v11M919.500 886v11M1033.500 886v11M1262.500 886v11M1376.500 886v11M1490.500 886v11M1147.500 886v22"/>
          <path d="M703 341.500h11M703 455.500h11M703 684.500h11M703 798.500h11M703 570.500h23M1604 341.500h11M1604 455.500h11M1604 684.500h11M1604 798.500h11M1593 570.500h22"/>
        </g>
        <g font-size="11" text-anchor="middle">
          <text x="749" y="252">1</text><text x="863" y="252">2</text><text x="977" y="252">3</text><text x="1091" y="252">4</text><text x="1205" y="252">5</text><text x="1319" y="252">6</text><text x="1433" y="252">7</text><text x="1547" y="252">8</text>
          <text x="749" y="895">1</text><text x="863" y="895">2</text><text x="977" y="895">3</text><text x="1091" y="895">4</text><text x="1205" y="895">5</text><text x="1319" y="895">6</text><text x="1433" y="895">7</text><text x="1547" y="895">8</text>
          <text x="709" y="288">A</text><text x="709" y="402">B</text><text x="709" y="515">C</text><text x="709" y="629">D</text><text x="709" y="743">E</text><text x="709" y="857">F</text>
          <text x="1610" y="288">A</text><text x="1610" y="402">B</text><text x="1610" y="515">C</text><text x="1610" y="629">D</text><text x="1610" y="743">E</text><text x="1610" y="857">F</text>
        </g>

        <!-- Front view -->
        <g fill="none" stroke="#1f5878">
          <path d="M1040 440.500H958.500A40 40 0 0 0 958.500 520.500H1040A91 91 0 1 1 1040 440.500"/>
          <circle cx="958.500" cy="417" r="11.500"/><circle cx="958.500" cy="544" r="11.500"/><circle cx="894.500" cy="481" r="11.500"/>
          <path d="M820 480.500h273" stroke-dasharray="12 1 2 1 2 1"/>
          <path d="M819.500 481v17" marker-end="url(#arrb)"/><path d="M1093.500 481v17" marker-end="url(#arrb)"/>
        </g>
        <g fill="none" stroke="#7a4a4c"><path d="M958.500 400v162" stroke-dasharray="9 2 2 2"/><path d="M942 416.500h33M942 544.500h33M894.500 464v34" stroke-dasharray="9 2 5 2"/></g>
        <g fill="#17507c" font-size="10" text-anchor="middle"><text x="820" y="511">A</text><text x="1094" y="511">A</text></g>
        <g fill="none" stroke="#2a1146">
          <path d="M982 416.500h94M979 544.500h97M894.500 493v117M958.500 556v54"/>
          <path d="M1069.500 437v-20" marker-end="url(#arr)"/><path d="M1069.500 460v20" marker-end="url(#arr)"/><path d="M1069.500 502v-21" marker-end="url(#arr)"/><path d="M1069.500 522v22"/>
          <path d="M918 603.500h-23" marker-end="url(#arr)"/><path d="M942 603.500h16" marker-end="url(#arr)"/>
          <path d="M874 425.500h10"/><path d="M884 426L1031 534" marker-start="url(#arr)" marker-end="url(#arr)"/>
          <path d="M924 420.500h9.500L944 445"/><path d="M940 438L944 447L973 518" marker-end="url(#arr)"/><path d="M958 480L942 443" marker-end="url(#arr)"/>
          <path d="M990 375.500h-10L953 427" marker-end="url(#arr)"/><path d="M975 385L960 414" marker-end="url(#arr)"/>
        </g>
        <g fill="#2a1146">
          <text x="995" y="380">3 HOLES ø10</text><text x="995" y="394">DRILLED THROUGH</text>
          <text x="846" y="429">ø80</text><text x="897" y="425">ø35</text>
          <text x="1063" y="453">28</text><text x="1063" y="517">28</text><text x="923" y="607">28</text>
          <text x="946" y="691">10</text><text x="853" y="713">5</text>
          <text x="891" y="777">SECTION A-A</text>
          <text x="1341" y="564">SCALE 1.500</text><text x="1311" y="591">Vedere Isometrica</text>
        </g>

        <!-- Section A-A -->
        <path d="M868 733h15v10h-15zM906 733h12v10h-12z" fill="url(#hatch)"/>
        <path d="M867.500 732.500h173v11h-173zM883.500 732v11M905.500 732v11M918.500 732v11M946.500 732v11M969.500 732v11" fill="none" stroke="#1f5878"/>
        <path d="M894.500 726v24M958.500 726v24" stroke="#6b4549" stroke-dasharray="9 2 3 2"/>
        <g fill="none" stroke="#2a1146">
          <path d="M883.500 680v49M905.500 680v49M831 732.500h34M831 743.500h34"/>
          <path d="M854 686.500h29" marker-end="url(#arr)"/><path d="M939 686.500h-33" marker-end="url(#arr)"/>
          <path d="M848 708.500h-9.500V732" marker-end="url(#arr)"/><path d="M838.500 773v-29" marker-end="url(#arr)"/>
        </g>

        <!-- Isometric view, in model millimetres -->
        <g transform="matrix(3.153 0 .833 -2.667 1369.700 406)" stroke-linejoin="round" stroke="none">
          <path d="M38.970 13.500H3A17.500 17.500 0 0 1 3-21.500H38.970A40 40 0 1 0 38.970 13.500Z" fill="url(#side)"/>
          <path d="M35.970-17.500L38.970-21.500L30-21.500L30-17.500z" fill="#00a000"/>
          <path d="M35.970-17.500L38.970-21.500A40 40 0 0 0-31-24" fill="none" stroke="#031" stroke-width=".8" vector-effect="non-scaling-stroke"/>
          <path d="M35.970 17.500H0A17.500 17.500 0 0 1-12.360-12.390A17.500 17.500 0 0 0 3 13.500H38.970Z" fill="url(#wall)" stroke="#300" stroke-width=".5" vector-effect="non-scaling-stroke"/>
          <path d="M35.970 17.500H0A17.500 17.500 0 0 1 0-17.500H35.970A40 40 0 1 0 35.970 17.500Z" fill="#00f000" stroke="#062806" stroke-width=".9" vector-effect="non-scaling-stroke"/>
          <use href="#hole" y="28"/><use href="#hole" x="-28"/><use href="#hole" y="-28"/>
        </g>
        <path d="M1368 401l10 21" stroke="#777" stroke-dasharray="9 2"/>

        <!-- Title block -->
        <path d="M1193.500 885V756.500H1604M1330.500 756v129M1460.500 756v129M1193 777.500h137M1193 796.500h137M1193 821.500h267M1193 833.500h411M1193 851.500h137M1241.500 833v18M1262.500 851v34M1330 803.500h130M1460 792.500h144M1460 812.500h144M1532.500 792v41M1460 853.500h144M1542.500 853v32M1577.500 853v32" fill="none" stroke="#000"/>
        <g font-family="Liberation Sans, sans-serif" font-size="5" font-weight="700">
          <text x="1196" y="762">Material:</text><text x="1196" y="783">Finish:</text>
          <text x="1196" y="802">Unless Otherwise Stated,</text><text x="1196" y="808">Linear Tol ±0.2, Angular Tol ±0°15'</text><text x="1196" y="813">Surface Finish: 0.8µm</text><text x="1196" y="819">All Dimensions: mm</text>
          <text x="1196" y="827">Drawing Scale:</text><text x="1257" y="830" font-size="7">1:1</text>
          <text x="1198" y="839">Approx Weight:</text><text x="1223" y="849" font-size="8">kg</text>
          <text x="1259" y="840">Drawing Produced In</text><text x="1253" y="847">Accordance With: BS8888</text>
          <text x="1196" y="857">Projection Method:</text><text x="1208" y="863">FIRST ANGLE</text><text x="1266" y="857">Sheet Size:</text>
          <text x="1333" y="763">This drawing and any information or</text><text x="1333" y="769">descriptive material set out on it</text><text x="1333" y="774">are the confidential and copyright property</text><text x="1333" y="780">of Emilian Popa. It and MUST NOT BE</text><text x="1333" y="786">DISCLOSED, COPIED, LOANED in whole or part</text><text x="1333" y="791">or used for any purpose without the</text><text x="1333" y="797">written permission of Emilian Popa .</text>
          <text x="1333" y="810">Document Type:</text><text x="1333" y="840">Legal Owner:</text>
          <text x="1343" y="872">Draft Number or 99 Bi 017 sc 1 an 10</text>
          <text x="1463" y="764">Description:</text><text x="1463" y="799">Drawn By:</text><text x="1535" y="799">Drawn Date:</text><text x="1463" y="819">Checked/Approved By:</text><text x="1535" y="819">Checked/Approved Date:</text>
          <text x="1463" y="839">Part Number:</text><text x="1463" y="860">Drawing Number:</text><text x="1546" y="860">Sheet:</text><text x="1579" y="860">Revision:</text>
        </g>
        <g>
          <text x="1334" y="831" font-size="6">Emilian Popa Confidential</text>
          <text x="1343" y="860" font-size="9">Emilian Popa</text><text x="1285" y="877" font-size="14">A3</text><text x="1550" y="876" font-size="7">1of1</text>
        </g>
        <g fill="#2a1146"><text x="1226" y="771">S235JR</text><text x="1475" y="782">Exercise - 01</text><text x="1501" y="849">100-00-001</text><text x="1468" y="879">100-00-001</text><text x="1586" y="879">A</text></g>
        <path d="M1217 872l11-5v15l-11-5zM1215 874.500h15M1232 874.500h14M1239.500 867v15" fill="none" stroke="#111"/><circle cx="1239.500" cy="874.500" r="5" fill="none" stroke="#111"/><circle cx="1239.500" cy="874.500" r="2.500" fill="none" stroke="#111"/>

        <!-- Watermark -->
        <g fill="#fff" fill-opacity=".6">
          <text x="593" y="541" font-family="Noto Sans CJK SC, sans-serif" font-size="68" font-weight="300">莫西网</text>
          <g font-family="Liberation Serif, serif" font-size="56"><text x="797" y="540">www.</text><text x="944" y="540">3dmox</text><text x="1115" y="540">.</text><text x="1154" y="540">com</text></g>
        </g>
      </svg>

      <div class="absolute left-1/2 top-[7px] flex h-8 -translate-x-1/2 items-center border border-[#b5b5b5] bg-white px-1">
        <button class="grid size-[26px] place-items-center" aria-label="Refit"><svg class="size-4" viewBox="0 0 16 16"><path d="M.5.500h14v14H.5z" fill="#fff" stroke="#999"/><circle cx="8" cy="7" r="4.500" fill="#e2f4fa" stroke="#44748a"/><path d="M11 10l4 5" stroke="#777" stroke-width="2"/></svg></button>
        <button class="grid size-[26px] place-items-center" aria-label="Zoom in"><svg class="size-4" viewBox="0 0 16 16"><circle cx="6" cy="6" r="5" fill="#c5ebf7" stroke="#44748a"/><path d="M9.500 9.500l6 6" stroke="#777" stroke-width="2"/><path d="M3 6h6M6 3v6" stroke="#123" stroke-width="1.800"/></svg></button>
        <button class="grid size-[26px] place-items-center" aria-label="Zoom out"><svg class="size-4" viewBox="0 0 16 16"><circle cx="6" cy="6" r="5" fill="#c5ebf7" stroke="#44748a"/><path d="M9.500 9.500l6 6" stroke="#777" stroke-width="2"/><path d="M3 6h6" stroke="#123" stroke-width="1.800"/></svg></button>
        <button class="grid size-[26px] place-items-center" aria-label="Repaint"><svg class="size-4" viewBox="0 0 16 16"><path d="M.5.500h15v15H.5z" fill="#8fc3dc" stroke="#9ab3bf"/><path d="M1 1h14L1 15z" fill="#eef6fa"/><path d="M5 13h5V9l5-5V1z" fill="#2a6d8e"/><path d="M5 13L15 3" stroke="#174a63" stroke-width="1.500"/></svg></button>
        <button class="grid size-[26px] place-items-center" aria-label="Display style"><svg class="size-[18px]" viewBox="0 0 18 18"><path d="M1 5l4-4h11v10l-4 4H1z" fill="#b9e5f2" stroke="#153c50" stroke-width="1.300"/><path d="M1 5h11v10H1z" fill="#f4fbfd" stroke="#153c50" stroke-width="1.300"/><path d="M12 5l4-4" stroke="#153c50"/><path d="M18 15v3h-3z" fill="#333"/></svg></button>
        <button class="grid size-[26px] place-items-center" aria-label="Saved views"><svg class="size-[18px]" viewBox="0 0 18 18"><path d="M1 4l5-3h6l3 5v5l-7 3-7-3z" fill="#d0d0d0" stroke="#bbb"/><path d="M1 7h9M10 2v12" stroke="#aaa"/><path d="M9 8h6v8H9z" fill="#eee" stroke="#aaa"/><path d="M18 15v3h-3z" fill="#333"/></svg></button>
        <button class="grid size-[26px] place-items-center" aria-label="View manager"><svg class="size-4" viewBox="0 0 16 16"><path d="M1 4l2-2h9v9l-2 3H1z" fill="#e4e4e4" stroke="#c2c2c2"/><path d="M10 7h6v3h-6zM11 5l4 3.500-4 4z" fill="#b9b9b9"/></svg></button>
        <button class="grid size-[26px] place-items-center" aria-label="Datum display"><svg class="size-[18px]" viewBox="0 0 18 18"><path d="M0 1l5 5M5 1L0 6M12 8v6h4M12 14l-3 3" fill="none" stroke="#5d533f" stroke-width="1.300"/><path d="M10 1L4 16" fill="none" stroke="#5d533f" stroke-width="1.300" stroke-dasharray="4 2"/><path d="M18 15v3h-3z" fill="#333"/></svg></button>
        <button class="grid size-[26px] place-items-center" aria-label="Plane display"><svg class="size-[18px]" viewBox="0 0 18 18"><path d="M5 3.500h10l-1 6M8 12H1l4-8.500" fill="none" stroke="#444" stroke-width="1.300"/><use href="#eye" x="8" y="9" width="10" height="7"/></svg></button>
        <button class="grid size-[26px] place-items-center" aria-label="Axis display"><svg class="size-[18px]" viewBox="0 0 18 18"><path d="M7 1L2 17" stroke="#5d533f" stroke-width="1.300" stroke-dasharray="5 2"/><use href="#eye" x="8" y="9" width="10" height="7"/></svg></button>
        <button class="mx-0.5 grid size-[23px] place-items-center border border-[#a3a3a3] bg-[#dedede]" aria-label="Point display"><svg class="size-[18px]" viewBox="0 0 18 18"><path d="M3 1l4 4M7 1L3 5M11 3l4 4M15 3l-4 4M1 10l4 4M5 10l-4 4" stroke="#555" stroke-width="1.300"/><use href="#eye" x="7" y="10" width="10" height="7"/></svg></button>
        <button class="grid size-[26px] place-items-center" aria-label="Csys display"><svg class="size-[18px]" viewBox="0 0 18 18"><path d="M6 1v9h8M6 10l-5 6" fill="none" stroke="#5d533f" stroke-width="1.300"/><path d="M4 3h4L6 0zM0 13v4h4z" fill="#5d533f"/><use href="#eye" x="7" y="9" width="10" height="7"/></svg></button>
      </div>

      <div class="absolute bottom-px left-4 flex gap-5 whitespace-nowrap font-['Liberation_Sans',sans-serif] text-xs text-[#8b8b90]"><span>SCALE : 1.000</span><span>TYPE : PART</span><span>NAME : EXERCISE_01</span><span>SIZE : A3</span></div>
    </div>

    <!-- Sheet tabs -->
    <div class="h-1 shrink-0 border-t border-[#8f8f8f] bg-[#f5f5f5]"></div>
    <div class="flex h-6 shrink-0 border border-[#9a9a9a] bg-[#dedede]">
      <div class="flex w-[75px] items-center gap-2.5 pb-0.5 pl-[5px]">
        <button aria-label="First sheet"><svg class="h-2 w-2.5" viewBox="0 0 10 8"><path d="M5 0v8L0 4zM10 0v8L5 4z" fill="#555"/></svg></button>
        <button aria-label="Previous sheet"><svg class="h-2 w-1.5" viewBox="0 0 6 8"><path d="M6 0v8L0 4z" fill="#aaa"/></svg></button>
        <button aria-label="Next sheet"><svg class="h-2 w-1.5" viewBox="0 0 6 8"><path d="M0 0v8l6-4z" fill="#aaa"/></svg></button>
        <button aria-label="Last sheet"><svg class="h-2 w-2.5" viewBox="0 0 10 8"><path d="M0 0v8l5-4zM5 0v8l5-4z" fill="#555"/></svg></button>
      </div>
      <button class="grid h-[18px] w-5 place-items-center border border-t-0 border-[#8f8f8f] bg-[#e8e8e8]" aria-label="Add sheet"><svg class="size-2" viewBox="0 0 8 8"><path d="M0 4h8M4 0v8" stroke="#444" stroke-width="1.500"/></svg></button>
      <button class="w-[78px] border-r border-[#9a9a9a] bg-[#f6f6f6] pb-1 font-bold">Sheet 1</button>
    </div>
  </section>
</main>

<!-- Status bar -->
<footer class="flex h-[34px] shrink-0 items-center border-t border-[#bdbdbd] bg-white pl-1.5 pr-[17px]">
  <button class="grid size-[22px] place-items-center border border-[#bdbdbd] bg-[#dedede]" aria-label="Navigator"><svg class="h-4 w-3"><use href="#nodes"/></svg></button>
  <button class="ml-[7px]" aria-label="Browser"><svg class="size-4" viewBox="0 0 16 16"><circle cx="8" cy="8" r="6" fill="#3d9bcb"/><path d="M4 6c3-3 4 1 3 3s-3 1-3-3M9 3c3 0 4 4 2 6z" fill="#b7e3f4"/><ellipse cx="8" cy="8" rx="9" ry="4" transform="rotate(-45 8 8)" fill="none" stroke="#3a7da3" stroke-width="1.300"/></svg></button>
  <button class="ml-2.5" aria-label="Full screen"><svg class="size-4" viewBox="0 0 16 16"><defs><linearGradient id="pane" x2="0" y2="1"><stop stop-color="#fff"/><stop offset="1" stop-color="#c5d6e4"/></linearGradient></defs><path d="M.5.500h15v15H.5z" fill="url(#pane)" stroke="#41607c"/></svg></button>
  <span class="ml-3 h-6 w-px bg-[#c4c4c4]"></span>
  <span class="grow"></span>
  <svg class="h-3 w-7" viewBox="0 0 28 12"><circle cx="6" cy="6" r="5" fill="#3fc454"/><circle cx="15" cy="6" r="3" fill="#ccc"/><circle cx="23" cy="6" r="3" fill="#ccc"/></svg>
  <button class="ml-1.5 flex h-6 w-[41px] items-center border border-[#c0c0c0]" aria-label="Find"><svg class="ml-1 h-4 w-[18px]" viewBox="0 0 18 16"><path d="M4 1h3v3h4V1h3l3 9v5h-6v-5H7v5H1v-5z" fill="#444"/></svg><span class="ml-0.5 h-[22px] w-px bg-[#c0c0c0]"></span><svg class="ml-1 h-[5px] w-2"><use href="#caret"/></svg></button>
  <div class="relative ml-[94px]">
    <select class="h-6 w-[166px] appearance-none border border-[#9d9d9d] bg-white pl-[7px] text-xs" aria-label="Selection filter"><option>General</option></select>
    <span class="pointer-events-none absolute inset-y-0 right-0 grid w-4 place-items-center border-l border-[#9d9d9d]"><svg class="h-[5px] w-2"><use href="#caret"/></svg></span>
  </div>
</footer>
</body>
</html>
